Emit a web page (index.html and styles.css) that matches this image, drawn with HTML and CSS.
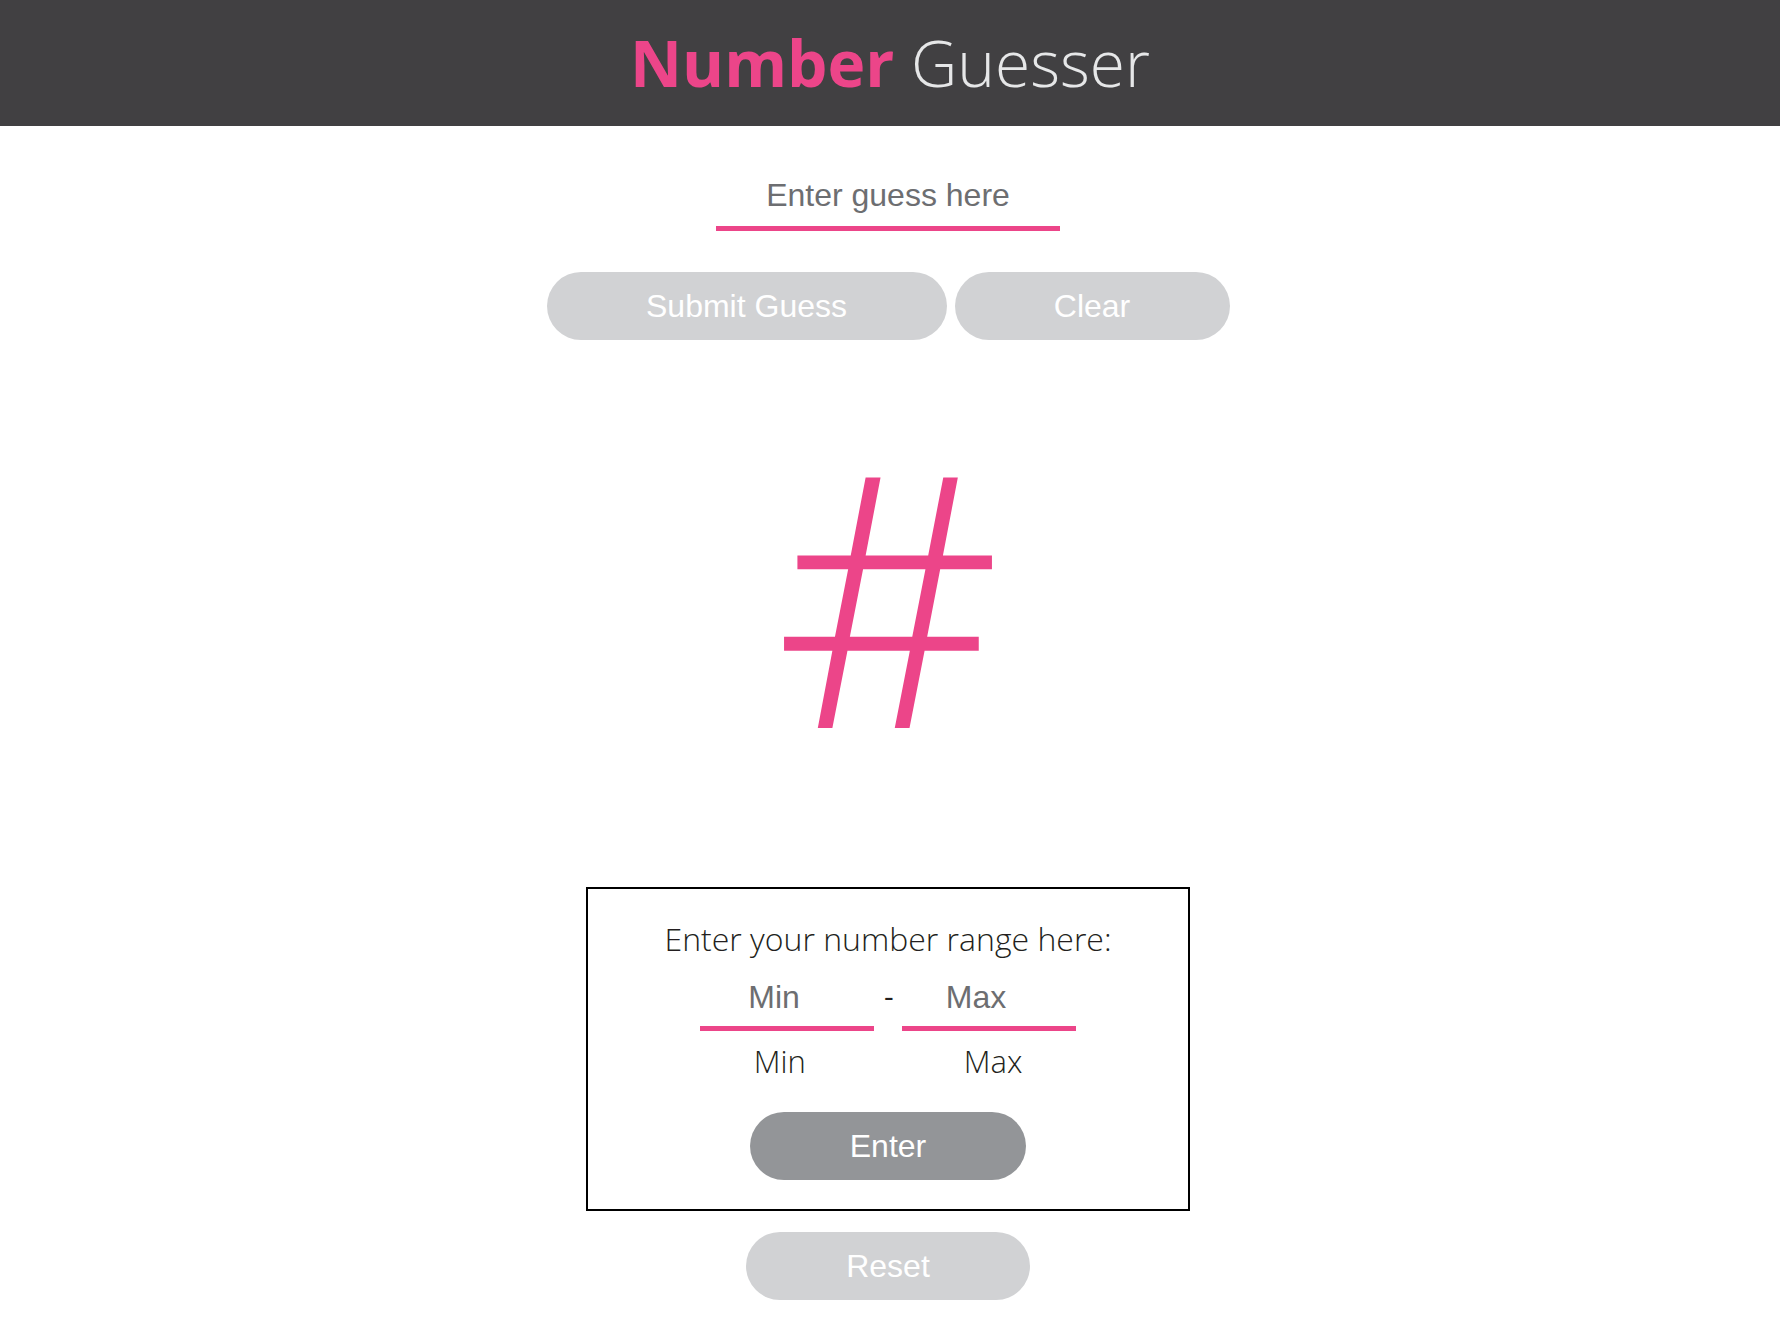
FILE: index.html
```html
<!DOCTYPE html>
<html lang="en">
<head>
<meta charset="utf-8">
<title>Number Guesser</title>
<link rel="stylesheet" href="styles.css">
</head>
<body>
<header class="topbar">
  <h1 class="title"><span class="title-strong">Number</span> Guesser</h1>
</header>
<main class="game">
  <input class="guess-input" type="text" placeholder="Enter guess here">
  <div class="guess-actions">
    <button class="btn btn-light btn-submit" type="button">Submit Guess</button>
    <button class="btn btn-light btn-clear" type="button">Clear</button>
  </div>
  <div class="display">#</div>
  <section class="range">
    <p class="range-title">Enter your number range here:</p>
    <div class="range-fields">
      <input class="range-input" type="text" placeholder="Min">
      <span class="range-dash">-</span>
      <input class="range-input" type="text" placeholder="Max">
    </div>
    <div class="range-labels">
      <span class="range-label">Min</span>
      <span class="range-label">Max</span>
    </div>
    <button class="btn btn-dark btn-enter" type="button">Enter</button>
  </section>
  <button class="btn btn-light btn-reset" type="button">Reset</button>
</main>
</body>
</html>
```
FILE: styles.css
```css
* {
  box-sizing: border-box;
}

body {
  margin: 0;
  background: #ffffff;
  font-family: "Liberation Sans", Arial, sans-serif;
}

.topbar {
  height: 126px;
  background: #414042;
  display: flex;
  align-items: center;
  justify-content: center;
}

.title {
  margin: 0;
  font-family: "Open Sans", sans-serif;
  font-size: 64px;
  font-weight: 300;
  line-height: 1;
  color: #e6e7e8;
}

.title-strong {
  font-weight: 700;
  color: #ec4589;
}

.game {
  display: flex;
  flex-direction: column;
  align-items: center;
  padding-right: 4px;
}

.guess-input {
  margin-top: 53px;
  width: 344px;
  height: 52px;
  padding: 0 0 15px;
  border: none;
  border-bottom: 5px solid #ec4589;
  font-family: "Liberation Sans", Arial, sans-serif;
  font-size: 32px;
  text-align: center;
  color: #6d6e71;
  outline: none;
  background: transparent;
}

.guess-input::placeholder,
.range-input::placeholder {
  color: #6d6e71;
  opacity: 1;
}

.guess-actions {
  margin-top: 41px;
  display: flex;
  gap: 8px;
}

.btn {
  height: 68px;
  border: none;
  border-radius: 34px;
  font-family: "Liberation Sans", Arial, sans-serif;
  font-size: 32px;
  color: #ffffff;
  padding: 0;
  cursor: pointer;
}

.btn-light {
  background: #d1d2d4;
}

.btn-dark {
  background: #939598;
}

.btn-submit {
  width: 400px;
}

.btn-clear {
  width: 275px;
}

.display {
  margin-top: 77px;
  height: 351px;
  font-family: "Open Sans", sans-serif;
  font-weight: 300;
  font-size: 351px;
  line-height: 351px;
  color: #ec4589;
}

.range {
  margin-top: 119px;
  width: 604px;
  border: 2px solid #000000;
  padding: 30px 0 29px;
  display: flex;
  flex-direction: column;
  align-items: center;
}

.range-title {
  margin: 0;
  font-family: "Open Sans", sans-serif;
  font-weight: 300;
  font-size: 32px;
  line-height: 40px;
  color: #231f20;
}

.range-fields {
  margin-top: 22px;
  display: flex;
  align-items: center;
  gap: 10px;
}

.range-input {
  width: 174px;
  height: 50px;
  padding: 0 26px 13px 0;
  border: none;
  border-bottom: 5px solid #ec4589;
  font-family: "Liberation Sans", Arial, sans-serif;
  font-size: 32px;
  text-align: center;
  color: #6d6e71;
  outline: none;
  background: transparent;
}

.range-dash {
  width: 8px;
  font-family: "Open Sans", sans-serif;
  font-weight: 400;
  font-size: 30px;
  color: #231f20;
  text-align: center;
  margin-top: -22px;
}

.range-labels {
  margin-top: 10px;
  display: flex;
  gap: 158px;
}

.range-label {
  font-family: "Open Sans", sans-serif;
  font-weight: 300;
  font-size: 31px;
  line-height: 40px;
  color: #231f20;
}

.btn-enter {
  margin-top: 31px;
  width: 276px;
}

.btn-reset {
  margin-top: 21px;
  width: 284px;
}
```
